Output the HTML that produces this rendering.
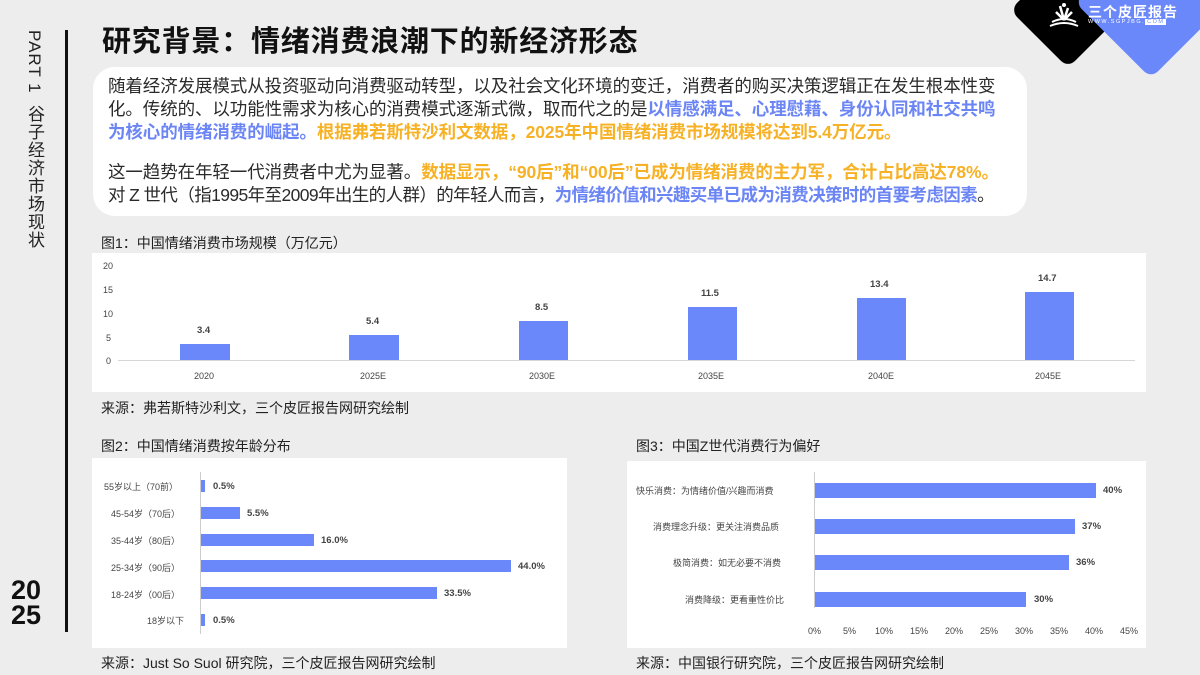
<!DOCTYPE html>
<html><head><meta charset="utf-8">
<style>
*{margin:0;padding:0;box-sizing:border-box}
body{width:1200px;height:675px;background:#ededed;position:relative;overflow:hidden;font-family:"Liberation Sans","Noto Sans CJK SC",sans-serif;color:#222}
.a{position:absolute;white-space:nowrap}
.vl{left:65px;top:30px;width:3px;height:602px;background:#111}
.part{left:22px;top:30px;writing-mode:vertical-rl;font-size:17px;letter-spacing:1px;color:#222}
.yr{left:11px;top:578px;font-size:27px;font-weight:bold;line-height:25px;color:#111}
.title{left:102px;top:18px;font-size:29px;font-weight:bold;color:#111;letter-spacing:0.8px}
.box{left:93px;top:67px;width:934px;height:149px;background:#fff;border-radius:22px}
.tx{font-size:17.5px;letter-spacing:-0.1px;line-height:23px;color:#2a2a2a}
.b{color:#6b85f5;font-weight:bold}
.o{color:#f7b125;font-weight:bold}
.cap{font-size:14px;color:#222}
.src{font-size:14px;color:#222}
.panel{background:#fff}
.bar{position:absolute;background:#6b88fb}
.sm{font-size:9px;color:#444}
.lb{font-size:9.5px;font-weight:bold;color:#444}
</style></head><body>
<div class="a vl"></div>
<div class="a part">PART 1&nbsp;&nbsp;谷子经济市场现状</div>
<div class="a yr">20<br>25</div>
<div class="a title">研究背景：情绪消费浪潮下的新经济形态</div>

<!-- logo -->
<div class="a" style="left:1027px;top:-31px;width:82px;height:82px;background:#000;border-radius:10px;transform:rotate(45deg)"></div>
<div class="a" style="left:1097px;top:-52px;width:108px;height:108px;background:#6b88fb;border-radius:10px;transform:rotate(45deg)"></div>
<svg class="a" style="left:1044px;top:2px" width="40" height="28" viewBox="0 0 40 28"><path d="M6 24 Q20 18 34 24 M8 20 Q20 14 32 20" stroke="#fff" stroke-width="2" fill="none"/><path d="M20 18 L16 4 M20 18 L24 6 M20 18 L12 10 M20 18 L28 10" stroke="#fff" stroke-width="2.5" fill="none"/><circle cx="20" cy="3" r="2" fill="#fff"/></svg>
<div class="a" style="left:1088px;top:2px;font-size:14px;color:#fff;font-weight:bold;letter-spacing:1px">三个皮匠报告</div>
<div class="a" style="left:1088px;top:19px;font-size:5.5px;color:#fff;letter-spacing:1.5px">WWW.SGPJBG.<span style="background:#fff;color:#6b88fb;padding:0 2px">COM</span></div>

<div class="a box"></div>
<div class="a tx" style="left:108px;top:75px">随着经济发展模式从投资驱动向消费驱动转型，以及社会文化环境的变迁，消费者的购买决策逻辑正在发生根本性变</div>
<div class="a tx" style="left:108px;top:98px">化。传统的、以功能性需求为核心的消费模式逐渐式微，取而代之的是<span class="b">以情感满足、心理慰藉、身份认同和社交共鸣</span></div>
<div class="a tx" style="left:108px;top:121px"><span class="b">为核心的情绪消费的崛起。</span><span class="o">根据弗若斯特沙利文数据，2025年中国情绪消费市场规模将达到5.4万亿元。</span></div>
<div class="a tx" style="left:108px;top:161px">这一趋势在年轻一代消费者中尤为显著。<span class="o">数据显示，“90后”和“00后”已成为情绪消费的主力军，合计占比高达78%。</span></div>
<div class="a tx" style="left:108px;top:184px;letter-spacing:-0.6px">对 Z 世代（指1995年至2009年出生的人群）的年轻人而言，<span class="b">为情绪价值和兴趣买单已成为消费决策时的首要考虑因素</span>。</div>

<!-- chart1 -->
<div class="a cap" style="left:101px;top:233px">图1：中国情绪消费市场规模（万亿元）</div>
<div class="a panel" style="left:92px;top:253px;width:1054px;height:139px"></div>
<div class="a sm" style="left:103px;top:261px">20</div>
<div class="a sm" style="left:103px;top:285px">15</div>
<div class="a sm" style="left:103px;top:309px">10</div>
<div class="a sm" style="left:106px;top:333px">5</div>
<div class="a sm" style="left:106px;top:356px">0</div>
<div class="a" style="left:118px;top:360px;width:1017px;height:1px;background:#d6d6d6"></div>
<div class="bar" style="left:180px;top:344px;width:50px;height:16px"></div>
<div class="bar" style="left:349px;top:335px;width:50px;height:25px"></div>
<div class="bar" style="left:519px;top:321px;width:49px;height:39px"></div>
<div class="bar" style="left:688px;top:307px;width:49px;height:53px"></div>
<div class="bar" style="left:857px;top:298px;width:49px;height:62px"></div>
<div class="bar" style="left:1025px;top:292px;width:49px;height:68px"></div>
<div class="a lb" style="left:197px;top:325px">3.4</div>
<div class="a lb" style="left:366px;top:316px">5.4</div>
<div class="a lb" style="left:535px;top:302px">8.5</div>
<div class="a lb" style="left:701px;top:288px">11.5</div>
<div class="a lb" style="left:870px;top:279px">13.4</div>
<div class="a lb" style="left:1038px;top:273px">14.7</div>
<div class="a sm" style="left:194px;top:371px">2020</div>
<div class="a sm" style="left:360px;top:371px">2025E</div>
<div class="a sm" style="left:529px;top:371px">2030E</div>
<div class="a sm" style="left:698px;top:371px">2035E</div>
<div class="a sm" style="left:868px;top:371px">2040E</div>
<div class="a sm" style="left:1035px;top:371px">2045E</div>
<div class="a src" style="left:101px;top:398px">来源：弗若斯特沙利文，三个皮匠报告网研究绘制</div>

<!-- chart2 -->
<div class="a cap" style="left:101px;top:436px">图2：中国情绪消费按年龄分布</div>
<div class="a panel" style="left:92px;top:458px;width:475px;height:190px"></div>
<div class="a" style="left:200px;top:472px;width:1px;height:162px;background:#ccc"></div>
<div class="a sm" style="left:104px;top:480px">55岁以上（70前）</div>
<div class="a sm" style="left:111px;top:507px">45-54岁（70后）</div>
<div class="a sm" style="left:111px;top:534px">35-44岁（80后）</div>
<div class="a sm" style="left:111px;top:561px">25-34岁（90后）</div>
<div class="a sm" style="left:111px;top:588px">18-24岁（00后）</div>
<div class="a sm" style="left:147px;top:614px">18岁以下</div>
<div class="bar" style="left:201px;top:480px;width:4px;height:12px"></div>
<div class="bar" style="left:201px;top:507px;width:39px;height:12px"></div>
<div class="bar" style="left:201px;top:534px;width:113px;height:12px"></div>
<div class="bar" style="left:201px;top:560px;width:310px;height:12px"></div>
<div class="bar" style="left:201px;top:587px;width:236px;height:12px"></div>
<div class="bar" style="left:201px;top:614px;width:4px;height:12px"></div>
<div class="a lb" style="left:213px;top:481px">0.5%</div>
<div class="a lb" style="left:247px;top:508px">5.5%</div>
<div class="a lb" style="left:321px;top:535px">16.0%</div>
<div class="a lb" style="left:518px;top:561px">44.0%</div>
<div class="a lb" style="left:444px;top:588px">33.5%</div>
<div class="a lb" style="left:213px;top:615px">0.5%</div>
<div class="a src" style="left:101px;top:653px">来源：Just So Suol 研究院，三个皮匠报告网研究绘制</div>

<!-- chart3 -->
<div class="a cap" style="left:636px;top:436px">图3：中国Z世代消费行为偏好</div>
<div class="a panel" style="left:627px;top:461px;width:519px;height:187px"></div>
<div class="a" style="left:814px;top:472px;width:1px;height:136px;background:#ccc"></div>
<div class="a sm" style="left:636px;top:484px">快乐消费：为情绪价值/兴趣而消费</div>
<div class="a sm" style="left:653px;top:520px">消费理念升级：更关注消费品质</div>
<div class="a sm" style="left:673px;top:556px">极简消费：如无必要不消费</div>
<div class="a sm" style="left:685px;top:593px">消费降级：更看重性价比</div>
<div class="bar" style="left:815px;top:483px;width:281px;height:15px"></div>
<div class="bar" style="left:815px;top:519px;width:260px;height:15px"></div>
<div class="bar" style="left:815px;top:555px;width:254px;height:15px"></div>
<div class="bar" style="left:815px;top:592px;width:211px;height:15px"></div>
<div class="a lb" style="left:1103px;top:485px">40%</div>
<div class="a lb" style="left:1082px;top:521px">37%</div>
<div class="a lb" style="left:1076px;top:557px">36%</div>
<div class="a lb" style="left:1034px;top:594px">30%</div>
<div class="a sm" style="left:808px;top:626px">0%</div>
<div class="a sm" style="left:843px;top:626px">5%</div>
<div class="a sm" style="left:875px;top:626px">10%</div>
<div class="a sm" style="left:910px;top:626px">15%</div>
<div class="a sm" style="left:945px;top:626px">20%</div>
<div class="a sm" style="left:980px;top:626px">25%</div>
<div class="a sm" style="left:1015px;top:626px">30%</div>
<div class="a sm" style="left:1050px;top:626px">35%</div>
<div class="a sm" style="left:1085px;top:626px">40%</div>
<div class="a sm" style="left:1120px;top:626px">45%</div>
<div class="a src" style="left:636px;top:653px">来源：中国银行研究院，三个皮匠报告网研究绘制</div>
</body></html>
